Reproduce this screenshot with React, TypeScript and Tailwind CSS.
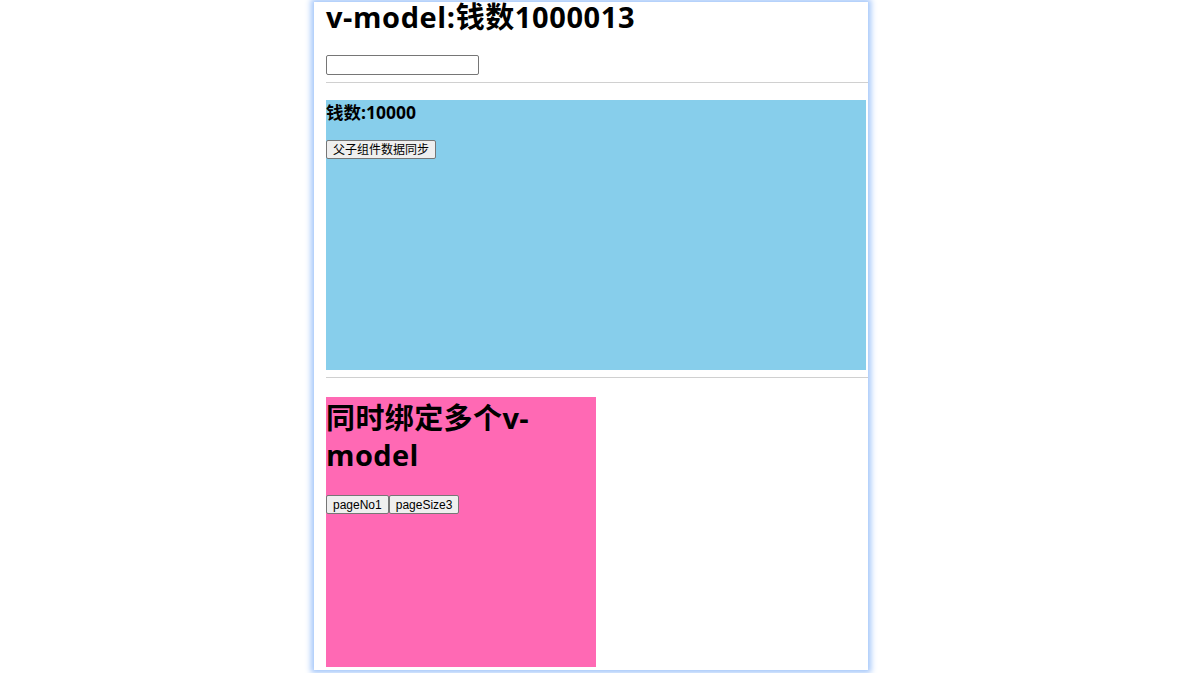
import React from "react";

const cjk = "font-['Open_Sans','Noto_Sans_CJK_SC',sans-serif]";
const btn =
  "h-[19px] px-[6px] bg-[#efefef] border border-[#767676] rounded-[2px] text-[12px] leading-none text-black font-['Liberation_Sans','Noto_Sans_CJK_SC',sans-serif]";

export default function App() {
  return (
    <div className="min-h-[673px] w-full bg-white pt-[2px]">
      <div
        className={`ml-[314px] w-[554px] h-[668px] bg-white pl-3 shadow-[0_0_6px_3px_#a3c6fa] ${cjk}`}
      >
        <h1 className="text-[29px] tracking-[0.6px] font-bold leading-[30px] text-black">
          v-model:钱数1000013
        </h1>
        <input
          type="text"
          className="mt-[23px] block w-[153px] h-[20px] border border-[#767676] rounded-[2px] bg-white"
        />
        <hr className="mt-[7px] mb-[17px] border-0 border-t border-[#d0d0d0]" />

        <div className="w-[540px] h-[270px] bg-[#87ceeb]">
          <h3 className="text-[17.5px] font-bold leading-[24px] text-black">钱数:10000</h3>
          <button className={`mt-[16px] ${btn}`}>父子组件数据同步</button>
        </div>

        <hr className="mt-[7px] mb-[19px] border-0 border-t border-[#d0d0d0]" />

        <div className="w-[270px] h-[270px] bg-[#ff69b4] pt-[2px]">
          <h1 className="text-[29px] tracking-[0.4px] font-bold leading-[37px] text-black">
            同时绑定多个v-model
          </h1>
          <div className="mt-[22px] flex">
            <button className={btn}>pageNo1</button>
            <button className={btn}>pageSize3</button>
          </div>
        </div>
      </div>
    </div>
  );
}
